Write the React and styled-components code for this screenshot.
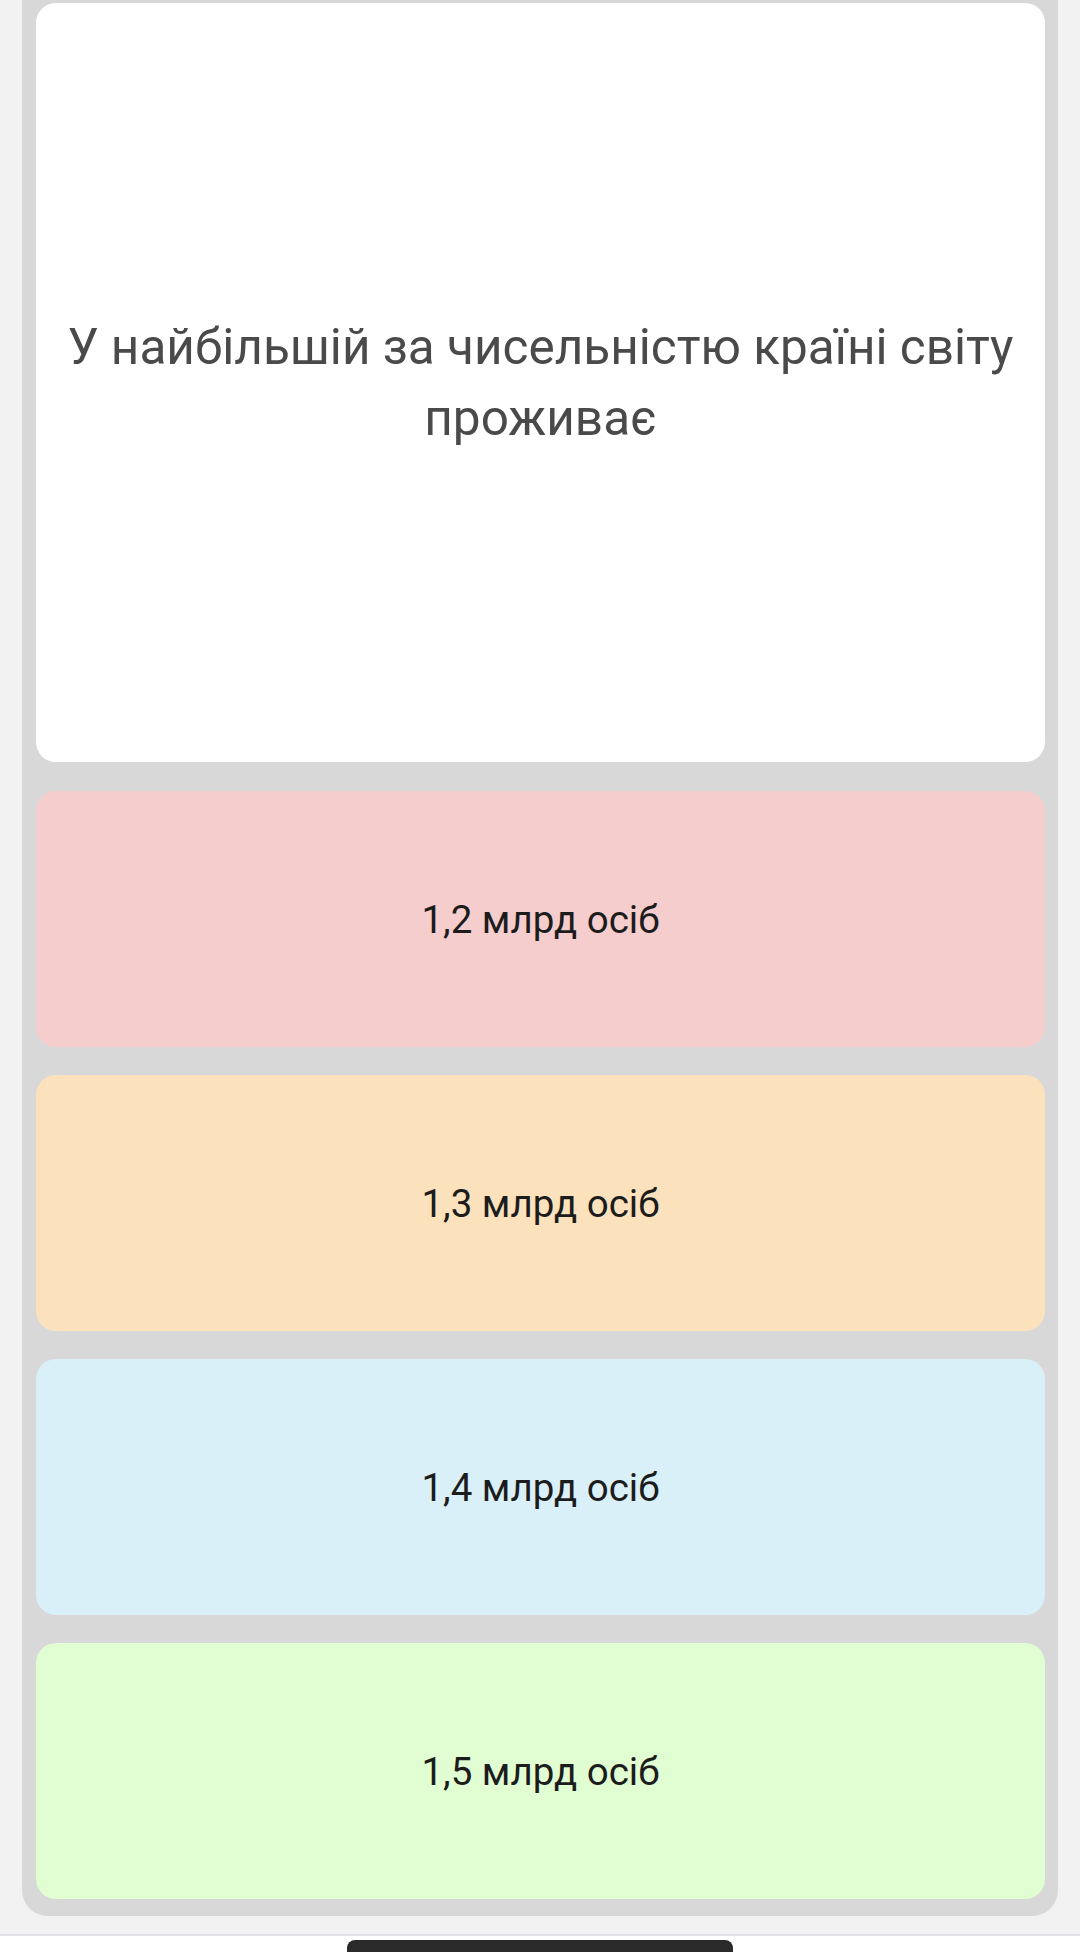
import React from "react";
import styled, { createGlobalStyle } from "styled-components";

const Global = createGlobalStyle`
  html, body {
    margin: 0;
    padding: 0;
    background: #f2f2f2;
    font-family: Roboto, "Noto Sans", sans-serif;
  }
`;

const Page = styled.div`
  width: 1080px;
  height: 1952px;
  display: flex;
  flex-direction: column;
  overflow: hidden;
`;

const Panel = styled.div`
  margin: 0 22px;
  padding: 3px 13px 17px 14px;
  background: #d8d8d8;
  border-radius: 0 0 26px 26px;
  display: flex;
  flex-direction: column;
  gap: 28px;
`;

const Question = styled.div`
  height: 759px;
  margin-bottom: 1px;
  background: #ffffff;
  border-radius: 20px;
  display: flex;
  align-items: center;
  justify-content: center;
  padding: 0 20px;
  box-sizing: border-box;
  text-align: center;
  color: #4a4a4a;
  font-size: 49.5px;
  line-height: 71px;
`;

const Answer = styled.div`
  height: 256px;
  background: ${(p) => p.$bg};
  border-radius: 20px;
  display: flex;
  align-items: center;
  justify-content: center;
  color: #1c1c1c;
  font-size: 38.5px;
`;

const Spacer = styled.div`
  flex: 1;
  border-bottom: 2px solid #e2e2e6;
`;

const NavBar = styled.div`
  height: 12px;
  background: #ffffff;
  display: flex;
  justify-content: center;
  padding-top: 4px;
`;

const Handle = styled.div`
  width: 386px;
  height: 20px;
  background: #2a2a2a;
  border-radius: 8px 8px 0 0;
`;

const answers = [
  { text: "1,2 млрд осіб", bg: "#f6cdcd" },
  { text: "1,3 млрд осіб", bg: "#fbe2bc" },
  { text: "1,4 млрд осіб", bg: "#d9f0f9" },
  { text: "1,5 млрд осіб", bg: "#e1fdd2" },
];

export default function App() {
  return (
    <Page>
      <Global />
      <Panel>
        <Question>
          У найбільшій за чисельністю країні світу проживає
        </Question>
        {answers.map((a) => (
          <Answer key={a.text} $bg={a.bg}>
            {a.text}
          </Answer>
        ))}
      </Panel>
      <Spacer />
      <NavBar>
        <Handle />
      </NavBar>
    </Page>
  );
}
